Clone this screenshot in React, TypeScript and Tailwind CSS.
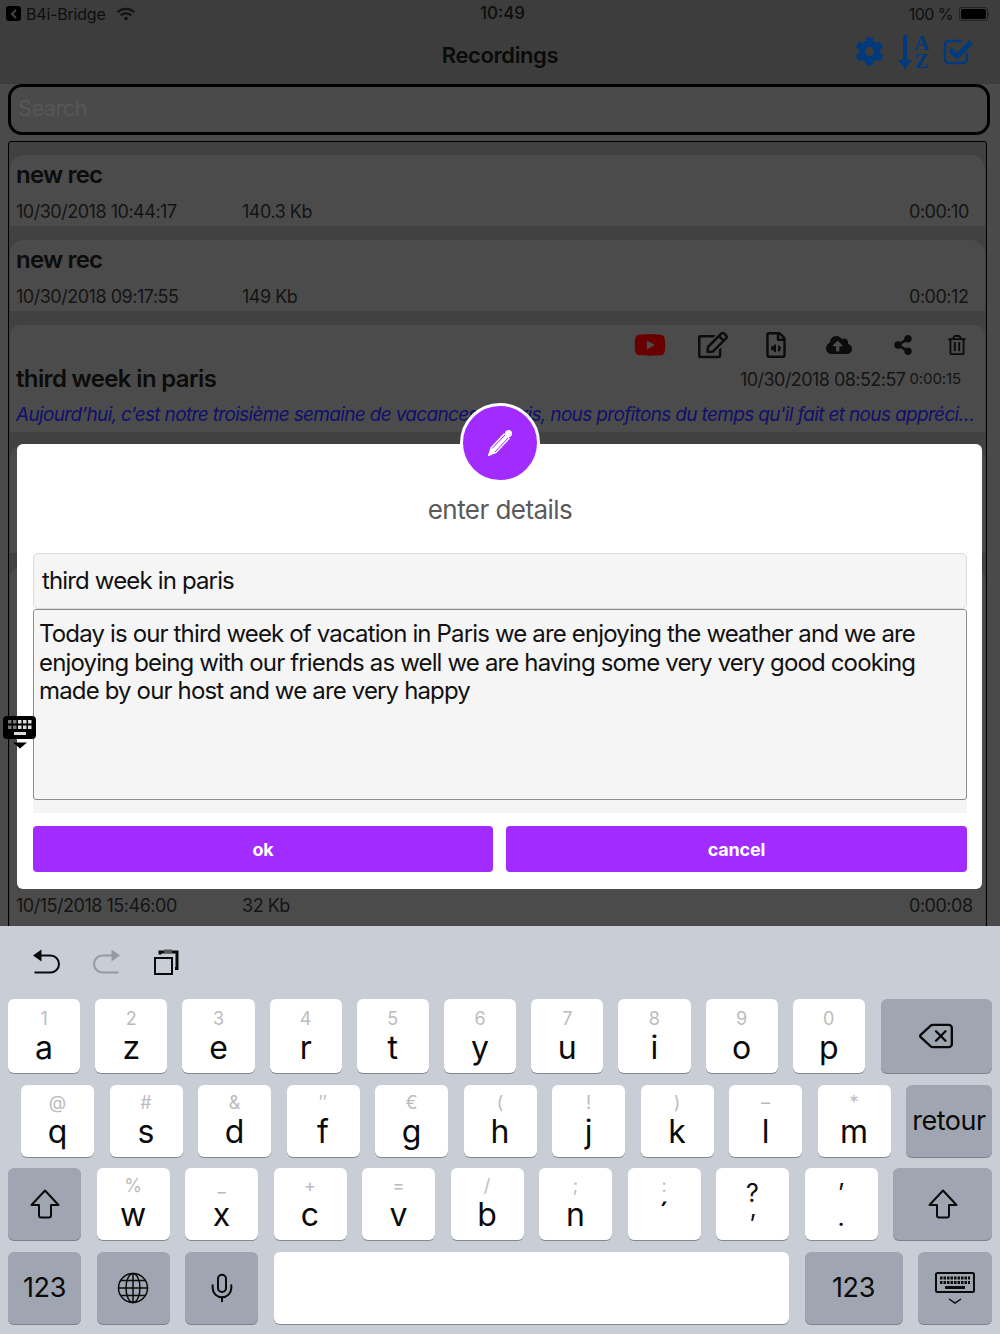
import { Delete, Mic } from "lucide-react";
import {
  FaCloudUploadAlt,
  FaCog,
  FaRegEdit,
  FaRegFileAudio,
  FaRegTrashAlt,
  FaShareAlt,
  FaWifi,
  FaYoutube,
} from "react-icons/fa";

function MetaRow({ date, size, time }: { date: string; size: string; time: string }) {
  return (
    <div className="flex text-[18px] leading-[24px] tracking-[-0.48px] text-[#141414]">
      <span className="w-[226px]">{date}</span>
      <span>{size}</span>
      <span className="ml-auto w-[62px]">{time}</span>
    </div>
  );
}

function RecordingCard({ title, date, size, time }: { title: string; date: string; size: string; time: string }) {
  return (
    <div className="h-[71px] mb-[14px] bg-[#4b4b4b] rounded-t-[14px] pl-[6px] pr-[14px] pt-[3px]">
      <div className="text-[24px] leading-[34px] font-semibold tracking-[-0.8px] text-[#0c0c0c] mb-[8px]">{title}</div>
      <MetaRow date={date} size={size} time={time} />
    </div>
  );
}

function ExpandedCard() {
  return (
    <div className="h-[107px] mb-[14px] bg-[#4b4b4b] rounded-t-[10px] pl-[6px] pr-[7px] pt-[6px]">
      <div className="flex justify-end items-center h-[28px] text-[#0c0c0c]">
        <FaYoutube className="text-[#690000]" size={32} />
        <FaRegEdit className="ml-[32px]" size={30} />
        <FaRegFileAudio className="ml-[35px]" size={26} />
        <FaCloudUploadAlt className="ml-[37px]" size={26} />
        <FaShareAlt className="ml-[41px]" size={20} />
        <FaRegTrashAlt className="ml-[34px] mr-[11px]" size={20} />
      </div>
      <div className="flex items-center h-[40px] pr-[17px]">
        <span className="text-[24px] font-semibold tracking-[-0.65px] text-[#0c0c0c]">third week in paris</span>
        <span className="ml-auto text-[18px] tracking-[-0.55px] text-[#141414]">10/30/2018 08:52:57</span>
        <span className="ml-[4px] text-[15px] tracking-[-0.1px] text-[#141414]">0:00:15</span>
      </div>
      <div className="mt-[2px] text-[19px] leading-[28px] italic tracking-[-0.66px] text-[#10106c] whitespace-nowrap">
        Aujourd’hui, c’est notre troisième semaine de vacances à Paris, nous profitons du temps qu'il fait et nous appréci…
      </div>
    </div>
  );
}

function KeyboardTab() {
  const cols = [0, 1, 2, 3, 4];
  return (
    <svg className="absolute left-[3px] top-[716px]" width="34" height="33" viewBox="0 0 34 33">
      <rect width="33" height="23" rx="4" fill="#000" />
      {cols.map((c) => (
        <rect key={`a${c}`} x={5 + c * 5} y="4" width="3.5" height="3.5" fill={c < 2 ? "#777" : "#ddd"} />
      ))}
      {cols.map((c) => (
        <rect key={`b${c}`} x={5 + c * 5} y="9.5" width="3.5" height="3.5" fill={c < 2 ? "#777" : "#ddd"} />
      ))}
      <rect x="11" y="16" width="12" height="3" fill="#ddd" />
      <path d="M10 26.500H24L17 32.500Z" fill="#000" />
    </svg>
  );
}

function Dialog() {
  return (
    <div className="absolute left-[17px] top-[444px] w-[965px] h-[445px] bg-white rounded-[6px] pl-[16px] pr-[15px]">
      <div className="absolute left-[443px] top-[-41px] w-[80px] h-[80px] rounded-full bg-[#a22bff] border-[3px] border-white flex items-center justify-center">
        <svg width="26" height="28" viewBox="0 0 26 28">
          <path d="M1 27L3.500 18.500L17 4L23 9.500L9.500 24Z" fill="#fff" />
          <circle cx="21.500" cy="4.500" r="3.500" fill="#fff" />
          <path d="M5 19.500L18 6M8 23L21 9" stroke="#a22bff" strokeWidth="1" />
          <path d="M1 27L2.200 22.800L5.200 25.800Z" fill="#fff" />
        </svg>
      </div>
      <div className="pt-[50px] h-[109px] text-center text-[26px] leading-[32px] text-[#5a5a5a] tracking-[-0.55px]">enter details</div>
      <div className="h-[56px] bg-[#f5f5f5] border border-[#dcdcdc] rounded-[5px] pl-[8px] text-[24px] leading-[54px] text-[#111] tracking-[-0.85px]">
        third week in paris
      </div>
      <div className="h-[191px] bg-[#f5f5f5] border border-[#8c8c8c] rounded-[3px] pl-[5px] pr-[5px] pt-[10px] text-[24px] leading-[28.500px] text-[#111] tracking-[-0.85px]">
        Today is our third week of vacation in Paris we are enjoying the weather and we are enjoying being with our friends as well we are having some very very good cooking made by our host and we are very happy
      </div>
      <div className="h-[13px] bg-[#f5f5f5]" />
      <div className="flex justify-between mt-[13px]">
        <button className="w-[460px] h-[46px] rounded-[4px] bg-[#a22bff] text-white text-[18px] font-bold tracking-[-0.2px]">ok</button>
        <button className="w-[461px] h-[46px] rounded-[4px] bg-[#a22bff] text-white text-[18px] font-bold tracking-[-0.2px]">cancel</button>
      </div>
    </div>
  );
}

function ShiftIcon() {
  return (
    <svg width="30" height="30" viewBox="0 0 30 30" fill="none" stroke="#0a0a0a" strokeWidth="2" strokeLinejoin="round">
      <path d="M15 1.500L28.500 16H21V26.500A2 2 0 0 1 19 28.500H11A2 2 0 0 1 9 26.500V16H1.500Z" />
    </svg>
  );
}

function LetterKey({ sub, main, className }: { sub: string; main: string; className: string }) {
  return (
    <div className={`shrink-0 bg-white rounded-[6px] shadow-[0_1px_0_#85888e] flex flex-col items-center ${className}`}>
      <span className="text-[18px] leading-[20px] text-[#bcbcbc]">{sub}</span>
      <span className="text-[32px] leading-[38px] text-[#0a0a0a]">{main}</span>
    </div>
  );
}

function PunctKey({ top, bottom, bottomClass }: { top: string; bottom: string; bottomClass: string }) {
  return (
    <div className="w-[73px] h-[72px] shrink-0 bg-white rounded-[6px] shadow-[0_1px_0_#85888e] flex flex-col items-center pt-[13px] text-[25px] leading-[24px] text-[#111]">
      <span>{top}</span>
      <span className={bottomClass}>{bottom}</span>
    </div>
  );
}

function GrayKey({ className, children }: { className: string; children: React.ReactNode }) {
  return (
    <div className={`bg-[#9fa6b1] rounded-[6px] shadow-[0_1px_0_#7d8188] flex items-center justify-center text-[#0a0a0a] ${className}`}>
      {children}
    </div>
  );
}

function Keyboard() {
  const row1 = [["1", "a"], ["2", "z"], ["3", "e"], ["4", "r"], ["5", "t"], ["6", "y"], ["7", "u"], ["8", "i"], ["9", "o"], ["0", "p"]];
  const row2 = [["@", "q"], ["#", "s"], ["&", "d"], ["″", "f"], ["€", "g"], ["(", "h"], ["!", "j"], [")", "k"], ["–", "l"], ["*", "m"]];
  const row3 = [["%", "w"], ["_", "x"], ["+", "c"], ["=", "v"], ["/", "b"], [";", "n"], [":", "´"]];

  return (
    <div className="h-[408px] bg-[#c9ced6] [font-family:Inter,sans-serif]">
      <div className="h-[73px] flex items-center pl-[32px] pb-[2px]">
        <svg width="29" height="27" viewBox="0 0 29 27" fill="none" stroke="#0a0a0a" strokeWidth="2">
          <path d="M1 7.500L9.500 1.500V13.500Z" fill="#0a0a0a" stroke="none" />
          <path d="M9 7.500H18.500A8.500 8.500 0 0 1 18.500 24.500H2.500" />
        </svg>
        <svg className="ml-[31px]" width="29" height="27" viewBox="0 0 29 27" fill="none" stroke="#96999f" strokeWidth="2">
          <path d="M28 7.500L19.500 1.500V13.500Z" fill="#96999f" stroke="none" />
          <path d="M20 7.500H10.500A8.500 8.500 0 0 0 10.500 24.500H26.500" />
        </svg>
        <svg className="ml-[33px]" width="25" height="26" viewBox="0 0 25 26" fill="none" stroke="#0a0a0a" strokeWidth="2">
          <rect x="1" y="9" width="17" height="16" />
          <path d="M6 5.500V3H23V19.500H21" strokeWidth="3" />
          <rect x="10" y="0.500" width="8" height="3.500" fill="#555" stroke="none" />
        </svg>
      </div>

      <div className="flex px-[8px] gap-[15px] h-[86px]">
        {row1.map(([s, m]) => (
          <LetterKey key={m} sub={s} main={m} className="w-[72.200px] h-[74px] pt-[10px]" />
        ))}
        <GrayKey className="flex-1 h-[74px] ml-[1px]">
          <Delete size={38} strokeWidth={1.5} />
        </GrayKey>
      </div>

      <div className="flex pl-[21px] pr-[8px] gap-[15.500px] h-[83px]">
        {row2.map(([s, m]) => (
          <LetterKey key={m} sub={s} main={m} className="w-[73px] h-[72px] pt-[8px]" />
        ))}
        <GrayKey className="flex-1 h-[72px] text-[27px] tracking-[-0.5px]">retour</GrayKey>
      </div>

      <div className="flex px-[8px] gap-[15.500px] h-[84px]">
        <GrayKey className="w-[73px] h-[72px] shrink-0">
          <ShiftIcon />
        </GrayKey>
        {row3.map(([s, m]) => (
          <LetterKey key={m} sub={s} main={m} className="w-[73px] h-[72px] pt-[8px]" />
        ))}
        <PunctKey top="?" bottom="’" bottomClass="mt-[7px]" />
        <PunctKey top="’" bottom="." bottomClass="mt-[0px]" />
        <GrayKey className="flex-1 h-[72px]">
          <ShiftIcon />
        </GrayKey>
      </div>

      <div className="flex px-[8px] gap-[15.500px]">
        <GrayKey className="w-[73px] h-[72px] shrink-0 text-[27px] tracking-[-0.3px]">123</GrayKey>
        <GrayKey className="w-[73px] h-[72px] shrink-0">
          <svg width="32" height="32" viewBox="0 0 32 32" fill="none" stroke="#0a0a0a" strokeWidth="1.500">
            <circle cx="16" cy="16" r="14.500" />
            <ellipse cx="16" cy="16" rx="7" ry="14.500" />
            <path d="M16 1.500V30.500M1.500 16H30.500M4 8.500H28M4 23.500H28" />
          </svg>
        </GrayKey>
        <GrayKey className="w-[73px] h-[72px] shrink-0">
          <Mic size={32} strokeWidth={1.5} />
        </GrayKey>
        <div className="w-[515.500px] h-[72px] shrink-0 bg-white rounded-[6px] shadow-[0_1px_0_#85888e]" />
        <GrayKey className="w-[98px] h-[72px] shrink-0 text-[27px] tracking-[-0.3px]">123</GrayKey>
        <GrayKey className="flex-1 h-[72px]">
          <svg width="40" height="32" viewBox="0 0 40 32" fill="none" stroke="#0a0a0a">
            <rect x="1" y="1" width="38" height="19" rx="1.500" strokeWidth="2" />
            <path d="M5 6H35M5 10.500H35" strokeWidth="3" strokeDasharray="2.500 1" />
            <path d="M10 15.500H30" strokeWidth="3" />
            <path d="M14 27L20 31L26 27" strokeWidth="1.500" />
          </svg>
        </GrayKey>
      </div>
    </div>
  );
}

export default function App() {
  return (
    <div className="w-[1000px] h-[1334px] overflow-hidden [font-family:Inter,sans-serif]">
      <div className="relative h-[926px] overflow-hidden bg-[#4a4a4a]">
        <div className="bg-[#3d3d3d] h-[84px]">
          <div className="grid grid-cols-3 items-center h-[27px] px-[6px] text-[16px] text-[#0e0e0e]">
            <div className="flex items-center">
              <div className="w-[15px] h-[15px] rounded-[3px] bg-black flex items-center justify-center">
                <svg width="8" height="10" viewBox="0 0 8 10" fill="none" stroke="#444" strokeWidth="2">
                  <path d="M6 1L2 5L6 9" />
                </svg>
              </div>
              <span className="ml-[5px] tracking-[-0.2px]">B4i-Bridge</span>
              <FaWifi className="ml-[11px] text-[#111]" size={18} />
            </div>
            <div className="text-center text-[17px] font-medium pl-[5px] mt-[1px]">10:49</div>
            <div className="flex items-center justify-end pr-[5px]">
              <span className="tracking-[-0.55px]">100 %</span>
              <div className="ml-[6px] w-[29px] h-[14px] border border-[#222] rounded-[3px] p-[1px]">
                <div className="h-full bg-black rounded-[2px]" />
              </div>
              <div className="w-[1px] h-[4px] bg-[#222]" />
            </div>
          </div>
          <div className="grid grid-cols-3 items-center h-[57px]">
            <div />
            <div className="text-center text-[22px] font-semibold text-[#0a0a0a] tracking-[-0.4px] pb-[1px]">Recordings</div>
            <div className="flex items-center justify-end pr-[26px] pb-[8px] text-[#003a7d]">
              <FaCog size={29} />
              <svg className="ml-[14px]" width="14" height="34" viewBox="0 0 14 34" fill="currentColor">
                <path d="M5 0H9V25H14L7 34L0 25H5Z" />
              </svg>
              <div className="ml-[2px] w-[15px] flex flex-col items-center text-[21px] leading-[18px] font-bold [font-family:'Liberation_Serif',serif]">
                <span>A</span>
                <span>Z</span>
              </div>
              <svg className="ml-[14px]" width="31" height="27" viewBox="0 0 31 27" fill="none" stroke="currentColor">
                <path d="M24 15V21A4 4 0 0 1 20 25H6A4 4 0 0 1 2 21V7A4 4 0 0 1 6 3H19" strokeWidth="2.500" />
                <path d="M7 11.500L14 18.500L28 4" strokeWidth="5" />
              </svg>
            </div>
          </div>
        </div>

        <div className="ml-[8px] w-[982px] h-[51px] border-[3px] border-black rounded-[14px] pl-[7px] text-[22px] leading-[43px] tracking-[-0.7px] text-[#575757]">
          Search
        </div>

        <div className="ml-[8px] mt-[6px] w-[979px] h-[800px] border border-black rounded-t-[3px] bg-[#414141] px-[1px] pt-[13px]">
          <RecordingCard title="new rec" date="10/30/2018 10:44:17" size="140.3 Kb" time="0:00:10" />
          <RecordingCard title="new rec" date="10/30/2018 09:17:55" size="149 Kb" time="0:00:12" />
          <ExpandedCard />
          <div className="h-[107px] mb-[14px] bg-[#4b4b4b] rounded-t-[10px]" />
          <div className="h-[359px] bg-[#4b4b4b] rounded-t-[10px] pl-[6px] pr-[14px] pb-[8px] flex flex-col justify-end">
            <MetaRow date="10/15/2018 15:46:00" size="32 Kb" time="0:00:08" />
          </div>
        </div>

        <Dialog />
        <KeyboardTab />
      </div>
      <Keyboard />
    </div>
  );
}
